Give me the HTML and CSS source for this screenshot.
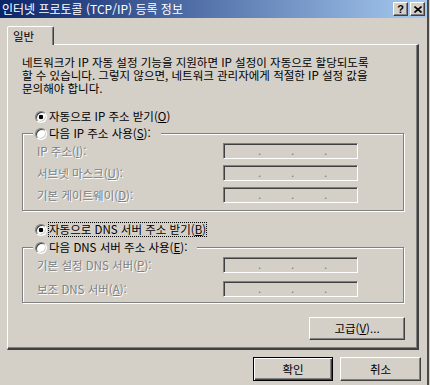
FILE: index.html
```html
<!DOCTYPE html>
<html lang="ko">

<head>
    <meta charset="UTF-8">
    <title>인터넷 프로토콜 (TCP/IP) 등록 정보</title>

    <link rel="stylesheet" href="styles.css">
</head>

<body>
    <div class="window">
        <div class="titlebar">
            <span class="title">인터넷 프로토콜 (TCP/IP) 등록 정보</span>
            <div class="caption-btns">
                <span class="cap-btn help">?</span>
                <span class="cap-btn close">
                    <svg width="8" height="7" viewBox="0 0 8 7"><path d="M0.5 0.5 L7.5 6.5 M7.5 0.5 L0.5 6.5" stroke="#000" stroke-width="1.6" fill="none"/></svg>
                </span>
            </div>
        </div>

        <div class="client">
            <div class="tabs">
                <div class="tab">일반</div>
            </div>

            <div class="panel">
                <p class="intro">네트워크가 IP 자동 설정 기능을 지원하면 IP 설정이 자동으로 할당되도록<br>할 수 있습니다. 그렇지 않으면, 네트워크 관리자에게 적절한 IP 설정 값을<br>문의해야 합니다.</p>

                <div class="option first">
                    <span class="radio checked"></span>
                    <span>자동으로 IP 주소 받기(<u>O</u>)</span>
                </div>

                <fieldset class="group ip-group">
                    <legend>
                        <span class="option">
                            <span class="radio"></span>
                            <span>다음 IP 주소 사용(<u>S</u>):</span>
                        </span>
                    </legend>
                    <div class="field-row">
                        <span class="label">IP 주소(<u>I</u>):</span>
                        <div class="ipbox"><span>.</span><span>.</span><span>.</span></div>
                    </div>
                    <div class="field-row">
                        <span class="label">서브넷 마스크(<u>U</u>):</span>
                        <div class="ipbox"><span>.</span><span>.</span><span>.</span></div>
                    </div>
                    <div class="field-row">
                        <span class="label">기본 게이트웨이(<u>D</u>):</span>
                        <div class="ipbox"><span>.</span><span>.</span><span>.</span></div>
                    </div>
                </fieldset>

                <div class="option dns-auto">
                    <span class="radio checked"></span>
                    <span class="focus">자동으로 DNS 서버 주소 받기(<u>B</u>)</span>
                </div>

                <fieldset class="group dns-group">
                    <legend>
                        <span class="option">
                            <span class="radio"></span>
                            <span>다음 DNS 서버 주소 사용(<u>E</u>):</span>
                        </span>
                    </legend>
                    <div class="field-row">
                        <span class="label">기본 설정 DNS 서버(<u>P</u>):</span>
                        <div class="ipbox"><span>.</span><span>.</span><span>.</span></div>
                    </div>
                    <div class="field-row">
                        <span class="label">보조 DNS 서버(<u>A</u>):</span>
                        <div class="ipbox"><span>.</span><span>.</span><span>.</span></div>
                    </div>
                </fieldset>

                <div class="panel-foot">
                    <button class="btn adv">고급(<u>V</u>)...</button>
                </div>
            </div>

            <div class="dlg-buttons">
                <button class="btn default">확인</button>
                <button class="btn">취소</button>
            </div>
        </div>
    </div>
</body>

</html>
```

FILE: styles.css
```css
/* 윈도우 클래식 대화상자, 바탕색 #d4d0c8 */
* {
    margin: 0;
    padding: 0;
    box-sizing: border-box;
}

html,
body {
    background: #d4d0c8;
}

body {
    width: 430px;
    height: 385px;
    overflow: hidden;
    font-family: "Noto Sans CJK KR", "Liberation Sans", sans-serif;
    font-size: 11.5px;
    color: #000;
}

u {
    text-underline-offset: 1px;
}

.window {
    width: 429px;
    height: 385px;
    border-right: 2px solid #4a4a4a;
}

/* 제목 표시줄 */
.titlebar {
    height: 18px;
    display: flex;
    align-items: center;
    justify-content: space-between;
    padding: 0 2px 0 2px;
    background: linear-gradient(to right, #0a246a, #a6caf0);
}

.title {
    color: #fff;
    font-size: 12px;
    line-height: 18px;
    white-space: nowrap;
}

.caption-btns {
    display: flex;
    gap: 2px;
}

.cap-btn {
    width: 15px;
    height: 14px;
    display: flex;
    align-items: center;
    justify-content: center;
    background: #d4d0c8;
    border: 1px solid;
    border-color: #fff #404040 #404040 #fff;
    box-shadow: inset -1px -1px #808080;
}

.cap-btn.help {
    font-family: "Liberation Sans", sans-serif;
    font-weight: bold;
    font-size: 11px;
    line-height: 12px;
}

/* 본문 */
.client {
    padding: 8px 0 0 7px;
}

.tabs {
    display: flex;
}

.tab {
    position: relative;
    z-index: 1;
    width: 47px;
    height: 19px;
    margin-bottom: -1px;
    padding: 2px 0 0 5px;
    line-height: 14px;
    background: #d4d0c8;
    border: 1px solid;
    border-bottom: 0;
    border-color: #fff #404040 transparent #fff;
    border-radius: 2px 2px 0 0;
    box-shadow: inset -1px 0 #808080;
}

.panel {
    width: 412px;
    height: 306px;
    display: flex;
    flex-direction: column;
    padding: 11px 13px 0 14px;
    border: 1px solid;
    border-width: 1px 2px 2px 1px;
    border-color: #fff #404040 #404040 #fff;
    box-shadow: inset -1px -1px #808080;
}

.intro {
    line-height: 13px;
    white-space: nowrap;
}

.option {
    display: flex;
    align-items: center;
    gap: 2px;
    height: 13px;
    line-height: 13px;
    white-space: nowrap;
}

.first {
    margin: 15px 0 0 13px;
}

.dns-auto {
    margin: 12px 0 0 13px;
}

.radio {
    flex: none;
    width: 12px;
    height: 12px;
    border-radius: 50%;
    background: #fff;
    border: 1px solid;
    border-color: #808080 #fff #fff #808080;
    box-shadow: inset 1px 1px #404040, inset -1px -1px #d4d0c8;
}

.radio.checked {
    background: radial-gradient(circle, #000 0 2px, #fff 2.6px);
}

.focus {
    outline: 1px dotted #000;
    outline-offset: 0;
}

/* 그룹 상자 */
.group {
    border: 1px solid #808080;
    box-shadow: inset 1px 1px #fff, 1px 1px #fff;
    padding: 0 14px 7px 14px;
    min-width: 0;
}

.group legend {
    margin-left: -4px;
    padding: 0 10px 0 2px;
    background: #d4d0c8;
}

.ip-group {
    margin-top: 4px;
    padding-top: 3px;
}

.dns-group {
    margin-top: 5px;
    padding-top: 3px;
    padding-bottom: 5px;
}

.field-row {
    display: flex;
    align-items: center;
    height: 16px;
}

.field-row + .field-row {
    margin-top: 6px;
}

.dns-group .field-row + .field-row {
    margin-top: 8px;
}

.label {
    width: 186px;
    color: #808080;
    text-shadow: 1px 1px 0 #fff;
    white-space: nowrap;
}

.ipbox {
    width: 135px;
    height: 16px;
    display: flex;
    gap: 30px;
    padding-left: 34px;
    line-height: 13px;
    color: #808080;
    border: 1px solid;
    border-color: #808080 #fff #fff #808080;
    box-shadow: inset 1px 1px #404040;
}

.ipbox span {
    width: 3px;
}

.panel-foot {
    display: flex;
    justify-content: flex-end;
    margin: 14px -1px 0 0;
}

/* 버튼 */
.btn {
    font: inherit;
    color: #000;
    background: #d4d0c8;
    border: 1px solid;
    border-color: #fff #404040 #404040 #fff;
    box-shadow: inset -1px -1px #808080;
    height: 23px;
    line-height: 13px;
}

.adv {
    width: 96px;
}

.dlg-buttons {
    display: flex;
    justify-content: flex-end;
    gap: 7px;
    margin-top: 7px;
    padding-right: 6px;
}

.dlg-buttons .btn {
    width: 81px;
    height: 24px;
}

.btn.default {
    width: 80px;
    border-color: #000;
    box-shadow: inset 1px 1px #fff, inset -1px -1px #404040, inset -2px -2px #808080;
}
```
